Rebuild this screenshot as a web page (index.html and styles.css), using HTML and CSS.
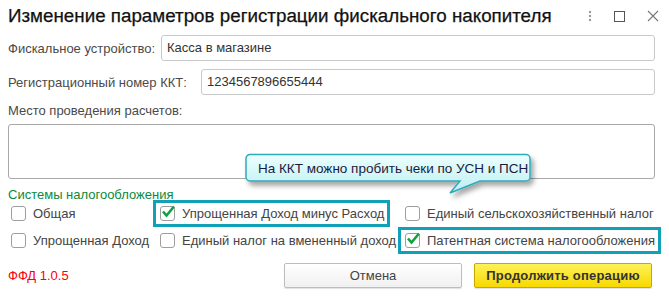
FILE: index.html
```html
<!DOCTYPE html>
<html lang="ru">
    <head>
        <meta charset="UTF-8">
        <title>Изменение параметров регистрации фискального накопителя</title>
        <link rel="stylesheet" href="styles.css">
    </head>
    <body>
        <div class="win">
            <div class="hd">
                <div class="title">Изменение параметров регистрации фискального накопителя</div>
                <div class="tools">
                    <svg width="4" height="12" viewBox="0 0 4 12"><circle cx="2" cy="2" r="1.2" fill="#9a9a9a"/><circle cx="2" cy="6" r="1.2" fill="#9a9a9a"/><circle cx="2" cy="10" r="1.2" fill="#9a9a9a"/></svg>
                    <svg width="11" height="11" viewBox="0 0 11 11"><rect x="0.5" y="0.5" width="10" height="10" fill="none" stroke="#555"/></svg>
                    <svg width="12" height="12" viewBox="0 0 12 12"><path d="M1 1L11 11M11 1L1 11" stroke="#777" stroke-width="1.1"/></svg>
                </div>
            </div>
            <div class="row">
                <label class="lbl lbl1">Фискальное устройство:</label>
                <div class="inp">Касса в магазине</div>
            </div>
            <div class="row">
                <label class="lbl lbl2">Регистрационный номер ККТ:</label>
                <div class="inp">1234567896655444</div>
            </div>
            <div class="lbl3">Место проведения расчетов:</div>
            <div class="area"></div>
            <div class="grp">Системы налогообложения</div>
            <div class="checks">
                <div class="ck c1"><span class="box"></span>Общая</div>
                <div class="ck c2 hl"><span class="box on"><svg width="15" height="13" viewBox="0 0 15 13"><path d="M2 6.5L5.5 10.5L13 1.5" fill="none" stroke="#14a040" stroke-width="2.6"/></svg></span>Упрощенная Доход минус Расход</div>
                <div class="ck c3"><span class="box"></span>Единый сельскохозяйственный налог</div>
                <div class="ck c1"><span class="box"></span>Упрощенная Доход</div>
                <div class="ck c2"><span class="box"></span>Единый налог на вмененный доход</div>
                <div class="ck c3 hl"><span class="box on"><svg width="15" height="13" viewBox="0 0 15 13"><path d="M2 6.5L5.5 10.5L13 1.5" fill="none" stroke="#14a040" stroke-width="2.6"/></svg></span>Патентная система налогообложения</div>
            </div>
            <div class="ft">
                <div class="ffd">ФФД 1.0.5</div>
                <div class="btn">Отмена</div>
                <div class="btn main">Продолжить операцию</div>
            </div>

            <div class="tip">
                <svg class="tip-bg" width="300" height="52" viewBox="0 0 300 52">
                    <defs>
                        <linearGradient id="tg" x1="0" y1="0" x2="0" y2="1">
                            <stop offset="0" stop-color="#ecffff"/>
                            <stop offset="1" stop-color="#bdeef2"/>
                        </linearGradient>
                        <filter id="sh" x="-10%" y="-20%" width="120%" height="160%">
                            <feDropShadow dx="3" dy="4" stdDeviation="2.5" flood-color="#000" flood-opacity="0.35"/>
                        </filter>
                    </defs>
                    <path d="M6 1.5H282a4 4 0 0 1 4 4V24a4 4 0 0 1-4 4H236L206 40L216 28H6a4 4 0 0 1-4-4V5.5a4 4 0 0 1 4-4Z" fill="url(#tg)" stroke="#2faabb" stroke-width="1.5" filter="url(#sh)"/>
                </svg>
                <div class="tip-txt">На ККТ можно пробить чеки по УСН и ПСН</div>
            </div>
        </div>
    </body>
</html>
```

FILE: styles.css
```css
body {
    margin: 0;
    background: #fff;
    font-family: "Liberation Sans", Arial, sans-serif;
    font-size: 13px;
    color: #4a4a4a;
}
.win {
    position: relative;
    width: 669px;
    height: 303px;
    padding: 0 14px 0 8px;
    box-sizing: border-box;
}
.hd {
    display: flex;
    align-items: center;
    height: 32px;
}
.title {
    flex: 1;
    font-size: 18.8px;
    color: #111;
    -webkit-text-stroke: 0.25px #111;
}
.tools {
    display: flex;
    align-items: center;
    gap: 22px;
    margin-right: -4px;
}
.row {
    display: flex;
    align-items: center;
    margin-top: 3px;
    height: 26px;
    margin-bottom: 8px;
}
.lbl1 {
    width: 153px;
}
.lbl2 {
    width: 193px;
}
.inp {
    flex: 1;
    height: 24px;
    line-height: 24px;
    border: 1px solid #c9c9c9;
    border-radius: 3px;
    padding: 0 5px;
    color: #333;
}
.lbl3 {
    margin-top: 7px;
    height: 16px;
}
.area {
    margin-top: 5px;
    height: 53px;
    border: 1px solid #a8a8a8;
    border-radius: 3px;
}
.grp {
    margin-top: 8px;
    color: #0a8a3a;
    height: 16px;
}
.checks {
    display: grid;
    grid-template-columns: 148px 245px 262px;
    grid-auto-rows: 27px;
    margin-left: -3px;
    margin-top: -3px;
}
.ck {
    display: flex;
    align-items: center;
    border: 3px solid transparent;
    padding-left: 3px;
    white-space: nowrap;
    color: #444;
}
.ck.hl {
    justify-self: start;
    padding-right: 3px;
    border-color: #10a1b9;
}
.c2 {
    padding-left: 4px;
}
.c3 {
    padding-left: 4px;
}
.box {
    position: relative;
    flex: none;
    width: 13px;
    height: 13px;
    border: 1px solid #9e9e9e;
    border-radius: 3px;
    margin-right: 7px;
    background: #fff;
}
.box svg {
    position: absolute;
    left: 0;
    top: -2px;
}
.ft {
    display: flex;
    align-items: center;
    margin-top: 9px;
}
.ffd {
    color: #f00;
    width: 276px;
}
.btn {
    width: 176px;
    height: 23px;
    line-height: 23px;
    text-align: center;
    border: 1px solid #bdbdbd;
    border-radius: 2px;
    background: linear-gradient(#fff, #f0f0f0);
    box-shadow: 0 1px 1px rgba(0, 0, 0, 0.12);
    color: #444;
}
.btn.main {
    margin-left: 12px;
    border-color: #c9a800;
    background: linear-gradient(#fef15a, #f7d900);
    font-weight: bold;
    color: #333;
    letter-spacing: 0.2px;
}
.tip {
    position: absolute;
    left: 244px;
    top: 153px;
    width: 300px;
    height: 52px;
}
.tip-bg {
    position: absolute;
    left: 0;
    top: 0;
}
.tip-txt {
    position: relative;
    padding: 8px 0 0 14px;
    font-size: 13.5px;
    color: #1b1b3a;
}
```
